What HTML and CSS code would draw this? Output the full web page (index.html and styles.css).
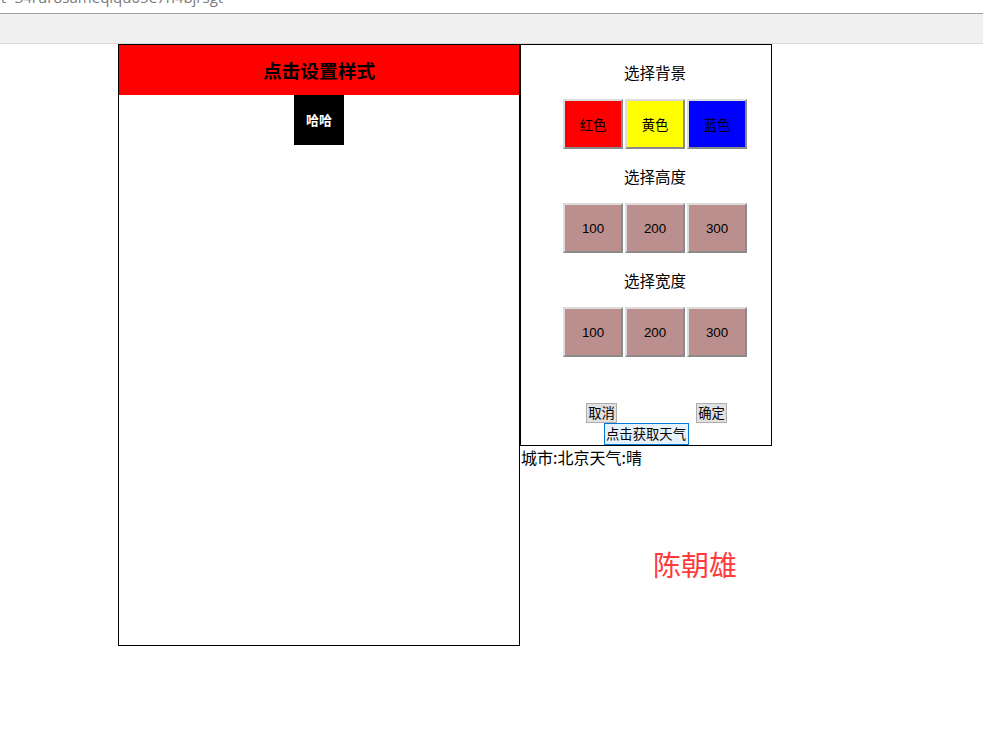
FILE: index.html
```html
<!DOCTYPE html>
<html lang="zh">
<head>
<meta charset="utf-8">
<title>点击设置样式</title>
<link rel="stylesheet" href="styles.css">
</head>
<body>
<div class="chrome-url"><span class="url-text">jt=34rurosameqiqu05e7n4bjrsgt</span></div>
<div class="chrome-bar"></div>
<div class="page">
  <div class="stage">
    <h3 class="stage-head">点击设置样式</h3>
    <div class="stage-body">
      <div class="box">哈哈</div>
    </div>
  </div>
  <div class="side">
    <div class="panel">
      <div class="sections">
        <div class="label">选择背景</div>
        <div class="row">
          <button class="opt red">红色</button>
          <button class="opt yellow">黄色</button>
          <button class="opt blue">蓝色</button>
        </div>
        <div class="label">选择高度</div>
        <div class="row">
          <button class="opt rose">100</button>
          <button class="opt rose">200</button>
          <button class="opt rose">300</button>
        </div>
        <div class="label">选择宽度</div>
        <div class="row">
          <button class="opt rose">100</button>
          <button class="opt rose">200</button>
          <button class="opt rose">300</button>
        </div>
      </div>
      <div class="actions">
        <button class="sys cancel">取消</button>
        <button class="sys confirm">确定</button>
      </div>
      <div class="weather-row">
        <button class="sys weather">点击获取天气</button>
      </div>
    </div>
    <div class="weather-text">城市:北京天气:晴</div>
    <div class="author">陈朝雄</div>
  </div>
</div>
</body>
</html>
```
FILE: styles.css
```css
html, body {
  margin: 0;
  padding: 0;
  background: #fff;
}
body {
  font-family: "Liberation Sans", "Noto Sans CJK SC", sans-serif;
  color: #000;
}
.chrome-url {
  height: 13px;
  overflow: hidden;
  border-bottom: 1px solid #a0a0a0;
}
.url-text {
  display: block;
  margin-top: -12px;
  margin-left: -3px;
  font-family: "Open Sans", "Noto Sans", sans-serif;
  font-size: 15px;
  line-height: 18px;
  color: #7a7a7a;
}
.chrome-bar {
  height: 29px;
  background: #f0f0f0;
  border-bottom: 1px solid #d9d9d9;
}
.page {
  display: flex;
  align-items: flex-start;
  padding-left: 118px;
}
.stage {
  width: 400px;
  height: 600px;
  border: 1px solid #000;
}
.stage-head {
  margin: 0;
  height: 50px;
  line-height: 50px;
  background: #ff0000;
  text-align: center;
  font-family: "Noto Sans CJK SC", sans-serif;
  font-size: 18.72px;
  font-weight: bold;
}
.stage-body {
  display: flex;
  justify-content: center;
}
.box {
  width: 50px;
  height: 50px;
  line-height: 50px;
  background: #000;
  color: #fff;
  text-align: center;
  font-family: "Noto Sans CJK SC", sans-serif;
  font-size: 13px;
  font-weight: bold;
}
.side {
  width: 252px;
}
.panel {
  width: 250px;
  height: 400px;
  border: 1px solid #000;
}
.sections {
  padding-left: 18px;
}
.label {
  height: 54px;
  line-height: 54px;
  text-align: center;
  font-family: "Noto Sans CJK SC", sans-serif;
  font-size: 15.5px;
}
.row {
  display: flex;
  justify-content: center;
  gap: 2px;
}
.opt {
  box-sizing: border-box;
  width: 60px;
  height: 50px;
  margin: 0;
  padding: 0;
  border: 2px solid;
  border-color: #dcdcdc #8a8a8a #8a8a8a #dcdcdc;
  font-family: "Liberation Sans", "Noto Sans CJK SC", sans-serif;
  font-size: 13.33px;
  color: #000;
}
.red { background: #ff0000; }
.yellow { background: #ffff00; }
.blue { background: #0000ff; }
.rose { background: #bc8f8f; }
.actions {
  display: flex;
  margin-top: 46px;
  height: 20px;
}
.sys {
  box-sizing: border-box;
  margin: 0;
  padding: 0 1px;
  height: 20px;
  border: 1px solid #adadad;
  background: #e1e1e1;
  font-family: "Noto Sans CJK SC", sans-serif;
  font-size: 13.33px;
  line-height: 16px;
  color: #000;
}
.cancel {
  width: 31px;
  margin-left: 65px;
}
.confirm {
  width: 31px;
  margin-left: 79px;
}
.weather-row {
  display: flex;
  justify-content: center;
}
.weather {
  width: 85px;
  height: 22px;
  border-color: #0078d7;
  background: #e5f1fb;
}
.weather-text {
  margin-left: 1px;
  font-family: "Noto Sans CJK SC", sans-serif;
  font-size: 16px;
  line-height: 22px;
}
.author {
  margin-top: 79px;
  margin-left: 133px;
  font-family: "Noto Sans CJK SC", sans-serif;
  font-size: 28px;
  line-height: 34px;
  color: #ff3a3a;
}
```
